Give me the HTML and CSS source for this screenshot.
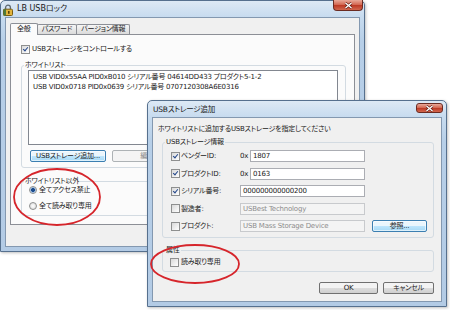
FILE: index.html
```html
<!DOCTYPE html>
<html lang="ja">
<head>
  <meta charset="utf-8">
  <title>LB USBロック</title>
  <link rel="stylesheet" href="styles.css">
</head>
<body>
  <div class="desk">
    <div class="win main-win">
      <div class="titlebar">
        <svg class="app-icon" width="10" height="12" viewBox="0 0 10 12">
          <path d="M2.6 5.5V3.6a2.4 2.4 0 0 1 4.8 0V5.5" fill="none" stroke="#5f6a72" stroke-width="1.3"/>
          <rect x="0.5" y="5.2" width="9" height="6.3" rx="1" fill="#e2b43c" stroke="#7a5c10"/>
          <rect x="0.5" y="5.2" width="2.5" height="6.3" fill="#4d7a3a"/>
          <rect x="5" y="7" width="1.6" height="2.8" fill="#5b4308"/>
        </svg>
        <span class="title">LB USBロック</span>
        <span class="close-btn">
          <svg width="9" height="7" viewBox="0 0 9 7"><path d="M1.5 1l6 5M7.5 1l-6 5" stroke="#5a1a12" stroke-width="2.6"/><path d="M1.5 1l6 5M7.5 1l-6 5" stroke="#fff" stroke-width="1.4"/></svg>
        </span>
      </div>
      <div class="client main-client">
        <div class="tabs">
          <span class="tab active">全般</span>
          <span class="tab">パスワード</span>
          <span class="tab">バージョン情報</span>
        </div>
        <div class="panel">
          <label class="check"><span class="box on"></span>USBストレージをコントロールする</label>
          <fieldset class="group whitelist">
            <legend>ホワイトリスト</legend>
            <div class="listbox">
              <div>USB VID0x55AA PID0xB010 シリアル番号 04614DD433 プロダクト5-1-2</div>
              <div>USB VID0x0718 PID0x0639 シリアル番号 0707120308A6E0316</div>
            </div>
            <div class="btn-row">
              <span class="btn hot add">USBストレージ追加...</span>
              <span class="btn off edit">編集...</span>
            </div>
          </fieldset>
          <fieldset class="group other">
            <legend>ホワイトリスト以外</legend>
            <label class="check opt"><span class="radio on"></span>全てアクセス禁止</label>
            <label class="check opt"><span class="radio"></span>全て読み取り専用</label>
          </fieldset>
        </div>
      </div>
    </div>

    <div class="win dialog">
      <div class="titlebar">
        <span class="title">USBストレージ追加</span>
        <span class="close-btn small">
          <svg width="9" height="7" viewBox="0 0 9 7"><path d="M1.5 1l6 5M7.5 1l-6 5" stroke="#5a1a12" stroke-width="2.6"/><path d="M1.5 1l6 5M7.5 1l-6 5" stroke="#fff" stroke-width="1.4"/></svg>
        </span>
      </div>
      <div class="client dlg-client">
        <p class="intro">ホワイトリストに追加するUSBストレージを指定してください</p>
        <fieldset class="group info">
          <legend>USBストレージ情報</legend>
          <div class="form">
            <label class="check"><span class="box on"></span>ベンダーID:</label>
            <div class="hex"><span class="prefix">0x</span><span class="field">1807</span></div>
            <label class="check"><span class="box on"></span>プロダクトID:</label>
            <div class="hex"><span class="prefix">0x</span><span class="field">0163</span></div>
            <label class="check"><span class="box on"></span>シリアル番号:</label>
            <span class="field">000000000000200</span>
            <label class="check"><span class="box"></span>製造者:</label>
            <span class="field off">USBest Technology</span>
            <label class="check"><span class="box"></span>プロダクト:</label>
            <span class="field off">USB Mass Storage Device</span>
            <span class="btn hot browse">参照...</span>
          </div>
        </fieldset>
        <fieldset class="group attr">
          <legend>属性</legend>
          <label class="check"><span class="box"></span>読み取り専用</label>
        </fieldset>
        <div class="dlg-buttons">
          <span class="btn ok">OK</span>
          <span class="btn cancel">キャンセル</span>
        </div>
      </div>
    </div>

    <svg class="marks" width="450" height="310" viewBox="0 0 450 310">
      <ellipse cx="57" cy="197" rx="43" ry="28" />
      <ellipse cx="195" cy="264" rx="44" ry="19" />
    </svg>
  </div>
</body>
</html>
```

FILE: styles.css
```css
body {
  margin: 0;
  background: #fff;
  font-family: "DejaVu Sans", "Noto Sans CJK JP", sans-serif;
  font-size: 7px;
  line-height: 10px;
  letter-spacing: -0.2px;
  color: #222;
  font-feature-settings: "palt";
}
.desk {
  position: relative;
  width: 450px;
  height: 310px;
  overflow: hidden;
}

/* windows */
.win {
  position: absolute;
  display: flex;
  flex-direction: column;
  box-sizing: border-box;
  border: 1px solid #56708e;
  border-radius: 5px 5px 0 0;
  background: linear-gradient(#dde9f5, #c7dbef 16px, #b7cfe8 40px, #b3cbe5);
  box-shadow: 1px 1px 3px rgba(0,0,0,0.25);
}
.main-win {
  left: 0;
  top: 0;
  width: 365px;
  height: 252px;
}
.dialog {
  left: 147px;
  top: 100px;
  width: 300px;
  height: 207px;
}
.titlebar {
  display: flex;
  align-items: flex-start;
  height: 16px;
  flex: none;
}
.app-icon {
  margin: 3px 0 0 2px;
}
.title {
  margin: 3px 0 0 4px;
  font-size: 8px;
  letter-spacing: 0;
  color: #1a1a1a;
}
.dialog .title {
  margin: 4px 0 0 5px;
  font-size: 7.5px;
  letter-spacing: -0.2px;
}
.close-btn {
  display: flex;
  align-items: center;
  justify-content: center;
  width: 30px;
  height: 11px;
  margin: -1px 1px 0 auto;
  box-sizing: border-box;
  border: 1px solid #6b2b22;
  border-top: none;
  border-radius: 0 0 4px 4px;
  background: linear-gradient(#e9a999, #d46a55 45%, #bd3b26 55%, #d2674f);
}
.close-btn.small {
  width: 27px;
  height: 10px;
  margin: 2px 3px 0 auto;
  border-top: 1px solid #6b2b22;
  border-radius: 3px;
}
.client {
  flex: 1;
  margin: 0 4px 4px;
  border: 1px solid #8398b0;
  background: #f0f0f0;
}

/* main window */
.main-client {
  padding: 0 4px;
}
.tabs {
  display: flex;
  align-items: flex-end;
  height: 11px;
  margin-top: 5px;
}
.tab {
  height: 9px;
  padding: 0 4px;
  margin-right: -1px;
  border: 1px solid #8c8f96;
  border-bottom: none;
  border-radius: 2px 2px 0 0;
  background: linear-gradient(#f6f6f6, #dadada);
  line-height: 9px;
}
.tab.active {
  position: relative;
  z-index: 1;
  height: 11px;
  margin-bottom: -1px;
  padding: 0 6px;
  background: #fbfbfb;
  line-height: 11px;
}
.panel {
  box-sizing: border-box;
  height: 191px;
  padding: 9px 8px 0 10px;
  border: 1px solid #8c8f96;
  background: #fbfbfb;
}
.check {
  display: flex;
  align-items: center;
  gap: 2px;
  height: 10px;
  white-space: nowrap;
}
.box {
  position: relative;
  flex: none;
  width: 7px;
  height: 7px;
  border: 1px solid #8e8f8f;
  background: linear-gradient(135deg, #d9d9d9, #fff);
}
.box.on::after {
  content: "";
  position: absolute;
  left: 2px;
  top: 0;
  width: 2px;
  height: 4px;
  border: solid #24478a;
  border-width: 0 1.5px 1.5px 0;
  transform: rotate(40deg);
}
.radio {
  flex: none;
  box-sizing: border-box;
  width: 8px;
  height: 8px;
  border: 1px solid #8e8f8f;
  border-radius: 50%;
  background: radial-gradient(#fff, #d6d6d6);
}
.radio.on {
  background: radial-gradient(circle, #1d4c8c 0 1.6px, #8fb5e0 2.2px, #eef3f9 3.5px);
}
.group {
  margin: 0;
  padding: 0 6px 5px 2px;
  min-width: 0;
  border: 1px solid #d3dbe2;
  border-radius: 3px;
}
.group legend {
  padding: 0 1px;
  line-height: 10px;
}
.whitelist {
  margin-top: 6px;
  padding-right: 7px;
}
.listbox {
  box-sizing: border-box;
  height: 75px;
  margin-left: 4px;
  padding: 1px 4px;
  border: 1px solid #828790;
  background: #fff;
  white-space: nowrap;
  overflow: hidden;
}
.btn-row {
  display: flex;
  gap: 6px;
  margin: 5px 0 0 6px;
}
.btn {
  display: flex;
  align-items: center;
  justify-content: center;
  box-sizing: border-box;
  height: 12px;
  border: 1px solid #707070;
  border-radius: 2px;
  background: linear-gradient(#f3f3f3 0 50%, #dddddd 50%, #cfcfcf);
  white-space: nowrap;
}
.btn.hot {
  border-color: #3c7fb1;
  background: linear-gradient(#eaf6fd 0 50%, #bee6fd 50%, #a7d9f5);
  box-shadow: inset 0 0 0 1px rgba(255,255,255,0.6);
}
.btn.off {
  border-color: #adb2b5;
  background: #f4f4f4;
  color: #8a8a8a;
}
.add { width: 76px; }
.edit { width: 76px; }
.other {
  margin-top: 8px;
  padding-bottom: 4px;
}
.opt {
  margin-left: 5px;
}
.opt + .opt {
  margin-top: 6px;
}
.other .opt:first-of-type {
  margin-top: -1px;
}

/* dialog */
.dlg-client {
  padding: 0 7px 0 5px;
}
.intro {
  margin: 6px 0 0;
}
.info {
  margin: 3px 0 0 4px;
}
.form {
  display: grid;
  grid-template-columns: 69px 125px 62px;
  grid-auto-rows: 12px;
  row-gap: 5.5px;
  margin: 3px 0 0 6px;
}
.form .check {
  grid-column: 1;
  height: 12px;
  gap: 1px;
}
.hex {
  display: flex;
  align-items: center;
}
.prefix {
  width: 10px;
  flex: none;
}
.field {
  flex: 1;
  box-sizing: border-box;
  height: 12px;
  padding: 0 2px;
  border: 1px solid #abadb3;
  background: #fff;
  line-height: 10px;
  white-space: nowrap;
  overflow: hidden;
}
.field.off {
  border-color: #c8cacd;
  background: #f4f4f4;
  color: #8d8d8d;
}
.browse {
  justify-self: end;
  width: 55px;
}
.attr {
  margin: 7px 0 0 4px;
  padding-bottom: 4px;
}
.attr .check {
  margin: 2px 0 0 5px;
}
.dlg-buttons {
  display: flex;
  justify-content: flex-end;
  gap: 5px;
  margin-top: 10px;
}
.ok { width: 59px; }
.cancel { width: 51px; }

/* red annotation rings */
.marks {
  position: absolute;
  left: 0;
  top: 0;
  pointer-events: none;
}
.marks ellipse {
  fill: none;
  stroke: #d6252b;
  stroke-width: 1.8;
}
```
